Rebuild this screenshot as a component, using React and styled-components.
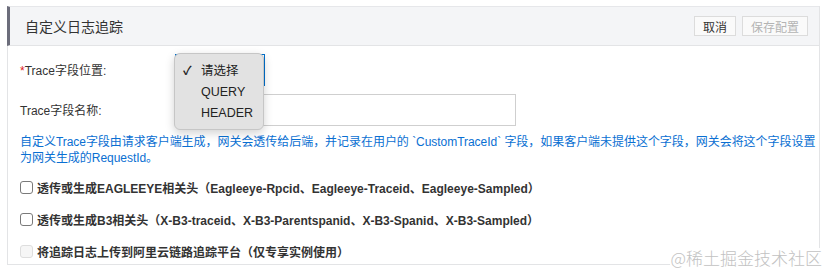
import React from "react";
import styled, { createGlobalStyle } from "styled-components";

const GlobalStyle = createGlobalStyle`
  body {
    margin: 0;
    background: #fff;
    font-family: "Liberation Sans", "Noto Sans CJK SC", sans-serif;
    color: #333;
  }
`;

const Page = styled.div`
  position: relative;
  width: 833px;
  height: 274px;
  padding: 6px 13px 0 7px;
  box-sizing: border-box;
`;

const Panel = styled.section`
  border: 1px solid #e3e4e6;
  border-top: none;
`;

const Header = styled.header`
  display: flex;
  align-items: center;
  justify-content: space-between;
  height: 40px;
  box-sizing: border-box;
  background: #f4f5f7;
  border-top: 1px solid #e6e7ea;
  border-bottom: 1px solid #e3e4e6;
  border-left: 3px solid #6c6d7b;
  margin-left: -1px;
  padding: 0 11px 0 15px;
`;

const Title = styled.h2`
  margin: 0;
  font-size: 14px;
  font-weight: 400;
  color: #333;
`;

const Actions = styled.div`
  display: flex;
  gap: 6px;
`;

const Button = styled.button`
  height: 20px;
  padding: 0 8px;
  font: inherit;
  font-size: 12px;
  border: 1px solid #dcdcdc;
  background: #fafafa;
  color: ${(p) => (p.disabled ? "#b4b4b4" : "#333")};
  cursor: ${(p) => (p.disabled ? "not-allowed" : "pointer")};
`;

const Body = styled.div`
  padding: 8px 12px 3px 12px;
`;

const FormRow = styled.div`
  display: flex;
  align-items: center;
  height: 32px;
  margin-bottom: 8px;
  font-size: 12px;
`;

const Label = styled.label`
  width: 155px;
  flex: none;
  color: #333;
  margin-top: -1px;
`;

const Required = styled.span`
  color: #e02020;
`;

const SelectWrap = styled.div`
  position: relative;
`;

const SelectBox = styled.div`
  width: 90px;
  height: 32px;
  box-sizing: border-box;
  border: 1px solid #0070cc;
  background: #fff;
`;

const Popup = styled.ul`
  position: absolute;
  top: -1px;
  left: -1px;
  width: 90px;
  margin: 0;
  padding: 7px 0 5px;
  list-style: none;
  box-sizing: border-box;
  background: #e2e2e2;
  border: 1px solid #c6c6c6;
  border-radius: 6px;
  box-shadow: 0 3px 10px rgba(0, 0, 0, 0.18);
  z-index: 2;
`;

const Option = styled.li`
  position: relative;
  height: 21px;
  line-height: 21px;
  padding-left: 26px;
  font-size: 12.5px;
  color: #222;
`;

const Check = styled.span`
  position: absolute;
  left: 8px;
  top: 0;
  font-size: 12px;
  font-weight: 700;
`;

const TextInput = styled.input`
  width: 341px;
  height: 32px;
  box-sizing: border-box;
  border: 1px solid #cfcfcf;
  outline: none;
  padding: 0 8px;
  font: inherit;
`;

const Hint = styled.p`
  margin: 0 0 11px;
  font-size: 12px;
  line-height: 16px;
  letter-spacing: -0.04px;
  color: #0a6fd2;
  white-space: nowrap;
`;

const CheckRow = styled.label`
  display: flex;
  align-items: center;
  gap: 4px;
  height: 20px;
  margin-bottom: 12px;
  font-size: 12px;
  font-weight: 700;
  color: #333;

  &:first-of-type {
    margin-top: 1px;
  }

  &:last-child {
    margin-bottom: 0;
  }
`;

const Box = styled.span`
  width: 13px;
  height: 13px;
  box-sizing: border-box;
  border-radius: 3px;
  border: 1px solid ${(p) => (p.disabled ? "#dedede" : "#7a7a7a")};
  background: ${(p) => (p.disabled ? "#f6f6f6" : "#fff")};
  flex: none;
`;

const Watermark = styled.div`
  position: absolute;
  right: 10px;
  bottom: 7px;
  padding: 0 1px;
  font-size: 17px;
  line-height: 19px;
  color: #c2c2c2;
  background: rgba(255, 255, 255, 0.9);
  font-family: "Noto Sans CJK SC", sans-serif;
  font-weight: 300;
`;

const checks = [
  { text: "透传或生成EAGLEEYE相关头（Eagleeye-Rpcid、Eagleeye-Traceid、Eagleeye-Sampled）" },
  { text: "透传或生成B3相关头（X-B3-traceid、X-B3-Parentspanid、X-B3-Spanid、X-B3-Sampled）" },
  { text: "将追踪日志上传到阿里云链路追踪平台（仅专享实例使用）", disabled: true },
];

export default function App() {
  return (
    <>
      <GlobalStyle />
      <Page>
        <Panel>
          <Header>
            <Title>自定义日志追踪</Title>
            <Actions>
              <Button>取消</Button>
              <Button disabled>保存配置</Button>
            </Actions>
          </Header>
          <Body>
            <FormRow>
              <Label>
                <Required>*</Required>Trace字段位置:
              </Label>
              <SelectWrap>
                <SelectBox />
                <Popup>
                  <Option>
                    <Check>✓</Check>请选择
                  </Option>
                  <Option>QUERY</Option>
                  <Option>HEADER</Option>
                </Popup>
              </SelectWrap>
            </FormRow>
            <FormRow>
              <Label>Trace字段名称:</Label>
              <TextInput />
            </FormRow>
            <Hint>
              自定义Trace字段由请求客户端生成，网关会透传给后端，并记录在用户的 `CustomTraceId` 字段，如果客户端未提供这个字段，网关会将这个字段设置
              <br />
              为网关生成的RequestId。
            </Hint>
            {checks.map((c) => (
              <CheckRow key={c.text}>
                <Box disabled={c.disabled} />
                {c.text}
              </CheckRow>
            ))}
          </Body>
        </Panel>
        <Watermark>@稀土掘金技术社区</Watermark>
      </Page>
    </>
  );
}
